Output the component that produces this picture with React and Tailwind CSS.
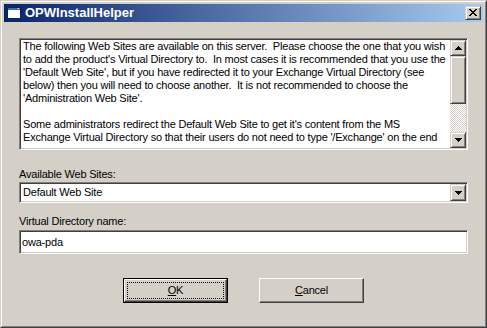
import React from "react";

const raisedSmall =
  "border border-t-[#d4d0c8] border-l-[#d4d0c8] border-r-[#404040] border-b-[#404040] shadow-[inset_1px_1px_0_#ffffff,inset_-1px_-1px_0_#808080] bg-[#d4d0c8]";
const sunken =
  "border border-t-[#808080] border-l-[#808080] border-r-white border-b-white shadow-[inset_1px_1px_0_#404040,inset_-1px_-1px_0_#d4d0c8]";

function Pixels({ rows, w, h, className }) {
  const rects = [];
  rows.forEach((r, y) => {
    r.split("").forEach((c, x) => {
      if (c === "X") rects.push(<rect key={x + "-" + y} x={x} y={y} width="1" height="1" />);
    });
  });
  return (
    <svg width={w} height={h} viewBox={`0 0 ${w} ${h}`} shapeRendering="crispEdges" className={className} fill="black">
      {rects}
    </svg>
  );
}

const UP = ["...X...", "..XXX..", ".XXXXX.", "XXXXXXX"];
const DOWN = ["XXXXXXX", ".XXXXX.", "..XXX..", "...X..."];
const CLOSE = ["XX....XX", ".XX..XX.", "..XXXX..", "...XX...", "..XXXX..", ".XX..XX.", "XX....XX"];

const lines = [
  "The following Web Sites are available on this server.  Please choose the one that you wish",
  "to add the product's Virtual Directory to.  In most cases it is recommended that you use the",
  "'Default Web Site', but if you have redirected it to your Exchange Virtual Directory (see",
  "below) then you will need to choose another.  It is not recommended to choose the",
  "'Administration Web Site'.",
  "",
  "Some administrators redirect the Default Web Site to get it's content from the MS",
  "Exchange Virtual Directory so that their users do not need to type '/Exchange' on the end",
];

export default function App() {
  return (
    <div className="w-[487px] h-[328px] bg-[#d4d0c8] border border-t-[#d4d0c8] border-l-[#d4d0c8] border-r-[#404040] border-b-[#404040] font-['Liberation_Sans',Arial,sans-serif] text-[11px] tracking-[-0.2px] text-black">
      <div className="h-full border border-t-white border-l-white border-r-[#808080] border-b-[#808080] p-[2px] flex flex-col">
        {/* Title bar */}
        <div className="h-[18px] shrink-0 flex items-center bg-[linear-gradient(to_right,#0a246a,#a6caf0)]">
          <svg width="16" height="16" viewBox="0 0 16 16" shapeRendering="crispEdges" className="ml-[2px]">
            <rect x="1" y="2" width="14" height="12" fill="#0a246a" />
            <rect x="2" y="3" width="12" height="2" fill="#3a6ea5" />
            <rect x="2" y="5" width="12" height="8" fill="#ffffff" />
            <rect x="11" y="3" width="1" height="1" fill="#f08040" />
            <rect x="12" y="3" width="1" height="1" fill="#d0d0d0" />
            <rect x="13" y="3" width="1" height="1" fill="#f04020" />
          </svg>
          <span className="ml-[3px] text-white font-bold text-[13px] tracking-normal leading-[18px]">OPWInstallHelper</span>
          <div className={"ml-auto mr-[2px] w-[16px] h-[14px] flex items-start justify-start pl-[3px] pt-[2px] " + raisedSmall}>
            <Pixels rows={CLOSE} w={8} h={7} />
          </div>
        </div>

        <div className="flex flex-col px-[15px]">
          {/* Multi-line text box */}
          <div className={"mt-[16px] h-[112px] bg-white flex " + sunken}>
            <div className="flex-1 overflow-hidden pt-[1px] pl-[3px]">
              {lines.map((l, i) => (
                <div key={i} className="h-[13px] leading-[13px] whitespace-pre">
                  {l}
                </div>
              ))}
            </div>
            <div className="w-[16px] shrink-0 flex flex-col my-[1px] mr-[1px]">
              <div className={"h-[16px] flex items-center justify-center " + raisedSmall}>
                <Pixels rows={UP} w={7} h={4} className="-mt-[1px]" />
              </div>
              <div className={"h-[48px] " + raisedSmall}></div>
              <div className="flex-1 bg-[repeating-conic-gradient(#ffffff_0_25%,#d4d0c8_0_50%)] bg-[length:2px_2px]"></div>
              <div className={"h-[16px] flex items-center justify-center " + raisedSmall}>
                <Pixels rows={DOWN} w={7} h={4} />
              </div>
            </div>
          </div>

          {/* Available Web Sites */}
          <div className="mt-[18px] h-[13px] leading-[13px]">Available Web Sites:</div>
          <div className={"mt-[1px] h-[21px] bg-white flex items-stretch " + sunken}>
            <div className="flex-1 pl-[3px] leading-[17px] pt-[1px]">Default Web Site</div>
            <div className={"w-[16px] my-[1px] mr-[1px] flex items-center justify-center " + raisedSmall}>
              <Pixels rows={DOWN} w={7} h={4} />
            </div>
          </div>

          {/* Virtual Directory name */}
          <div className="mt-[12px] h-[13px] leading-[13px]">Virtual Directory name:</div>
          <div className={"mt-[2px] h-[24px] bg-white flex items-center pl-[2px] " + sunken}>
            <span className="leading-[13px]">owa-pda</span>
          </div>

          {/* Buttons */}
          <div className="mt-[24px] flex justify-center gap-[31px]">
            <div className="w-[105px] h-[25px] border border-black">
              <div className="relative h-full border border-t-white border-l-white border-r-[#404040] border-b-[#404040] shadow-[inset_-1px_-1px_0_#808080] flex items-center justify-center">
                <div className="absolute inset-[2px] border border-dotted border-black"></div>
                <span className="leading-[13px]">
                  <span className="underline underline-offset-[1px]">O</span>K
                </span>
              </div>
            </div>
            <div className="w-[105px] h-[25px] border border-t-white border-l-white border-r-[#404040] border-b-[#404040] shadow-[inset_-1px_-1px_0_#808080] flex items-center justify-center">
              <span className="leading-[13px]">
                <span className="underline underline-offset-[1px]">C</span>ancel
              </span>
            </div>
          </div>
        </div>
      </div>
    </div>
  );
}
